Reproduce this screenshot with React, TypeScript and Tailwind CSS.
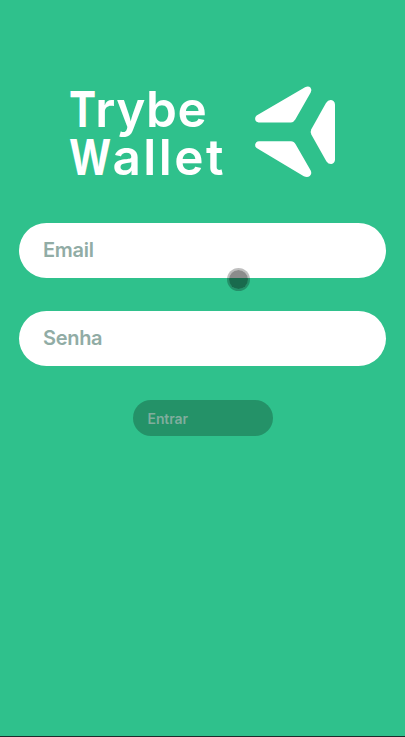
import React from 'react';

function Logo() {
  return (
    <svg className="mt-[2px] h-[94px] w-[82px] shrink-0" viewBox="254 85 82 94" fill="#fff" aria-hidden="true">
      <path d="M256.6 115.6 L305 87.3 Q308.5 85.4 310.6 87.8 Q312.2 90 310.7 92.6 L295.3 119.6 Q293.7 122.4 291 122.4 H258.6 Q255.6 122.2 255.1 119 Q255 116.8 256.6 115.6Z" />
      <path d="M256.6 148.1 L303.8 176.2 Q307.3 177.8 309.8 176 Q312.2 173.8 310.7 170.6 L295.6 144.3 Q294 141.2 291 141.2 H259 Q255.6 141.6 255.1 144.8 Q255 146.9 256.6 148.1Z" />
      <path d="M311.3 129.3 L326 103 Q328 99.8 331 100 Q334.8 100.5 335 104.5 V159.5 Q334.8 163.4 331.4 164 Q328.4 164.2 326.5 161.4 L311.3 134.5 Q310 132 311.3 129.3Z" />
    </svg>
  );
}

function Field({ label, type }: { label: string; type: string }) {
  return (
    <input
      type={type}
      placeholder={label}
      aria-label={label}
      className="h-[55px] w-full rounded-full bg-white px-6 pb-[2px] text-[20px] font-semibold tracking-[-0.3px] text-[#16382b] outline-none placeholder:text-[#91aca5]"
    />
  );
}

export default function App() {
  return (
    <main className="relative flex h-[737px] w-full flex-col items-center overflow-hidden border-b border-[#1b2c2b] bg-[#2fc18c] font-['Inter','Liberation_Sans',sans-serif]">
      <header className="mt-[83px] flex h-[96px] w-[266px] justify-between">
        <h1 className="mt-[2px] -ml-px text-[49.5px] leading-[48px] font-semibold text-white">
          <span className="block h-12 tracking-[0.6px]">
            <span className="-mr-[7px] inline-block origin-left scale-x-[0.82] font-bold">T</span>rybe
          </span>
          <span className="block h-12 tracking-[2.5px]">
            <span className="-mr-[10px] inline-block origin-left scale-x-[0.82] font-bold">W</span>allet
          </span>
        </h1>
        <Logo />
      </header>
      <form className="mt-[44px] flex w-[367px] flex-col items-center gap-[33px]">
        <Field label="Email" type="email" />
        <Field label="Senha" type="password" />
        <button
          type="button"
          disabled
          className="mt-px h-[36px] w-[140px] rounded-full bg-[#249268] px-[15px] text-left text-[14px] font-semibold tracking-[-0.1px] text-[#80ad9d]"
        >
          Entrar
        </button>
      </form>
      <div className="absolute top-[268px] left-[227px] size-[23px] rounded-full border-2 border-black/25 bg-black/45 bg-clip-padding" />
    </main>
  );
}
